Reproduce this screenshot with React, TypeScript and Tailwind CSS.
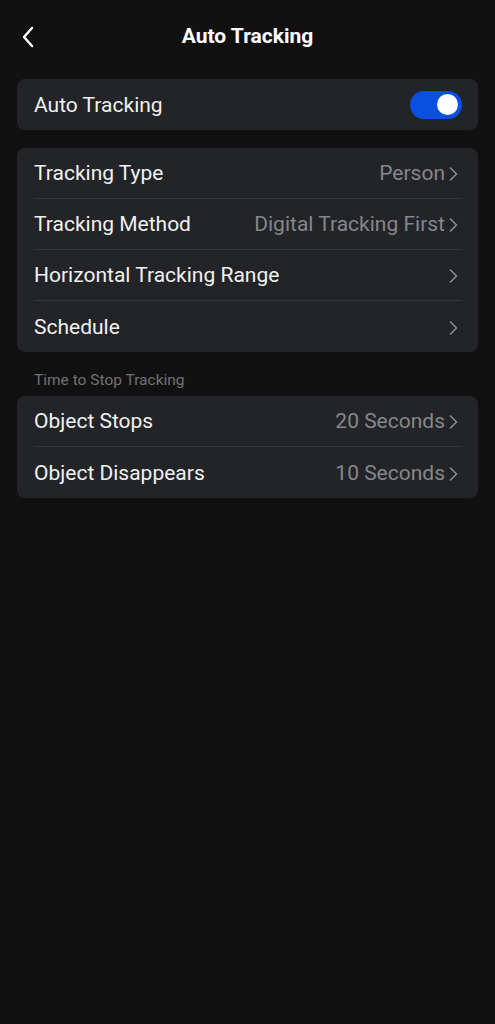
import React from 'react';

const Chevron = ({ className = '' }: { className?: string }) => (
  <svg width="9" height="16" viewBox="0 0 9 16" className={className} fill="none">
    <path d="M1.5 2l6 6-6 6" stroke="currentColor" strokeWidth="1.7" strokeLinecap="round" strokeLinejoin="round" />
  </svg>
);

type RowProps = { label: string; value?: string; last?: boolean };

const Row = ({ label, value, last }: RowProps) => (
  <div className="pl-[17px] pr-[16px]">
    <div className={`flex h-[51px] items-center justify-between pt-[2px] ${last ? '' : 'border-b border-[#34373c]'}`}>
      <span className="text-[21px] text-[#f1f1f1]">{label}</span>
      <span className="flex items-center gap-[4px] pr-[4px] text-[21px] text-[#85878a]">
        {value && <span>{value}</span>}
        <Chevron className="text-[#8a8c8f]" />
      </span>
    </div>
  </div>
);

const App: React.FC = () => {
  return (
    <div className="min-h-[1024px] w-full bg-[#111111] font-['Roboto',sans-serif]">
      {/* Header */}
      <div className="relative flex h-[74px] items-center justify-center">
        <button className="absolute left-[21px] top-[26px] text-white">
          <svg width="14" height="22" viewBox="0 0 14 22" fill="none">
            <path d="M11 2L3 11l8 9" stroke="currentColor" strokeWidth="2.4" strokeLinecap="round" strokeLinejoin="round" />
          </svg>
        </button>
        <h1 className="text-[21px] font-bold text-white">Auto Tracking</h1>
      </div>

      <div className="mt-[5px] flex flex-col px-[17px]">
        {/* Toggle card */}
        <div className="flex h-[51px] items-center justify-between rounded-[8px] bg-[#222428] pl-[17px] pr-[16px]">
          <span className="pt-[2px] text-[21px] text-[#f1f1f1]">Auto Tracking</span>
          <div className="flex h-[28px] w-[52px] items-center justify-end rounded-full bg-[#0a4fe0] pr-[4px]">
            <div className="h-[21px] w-[21px] rounded-full bg-white" />
          </div>
        </div>

        {/* Tracking settings */}
        <div className="mt-[18px] rounded-[8px] bg-[#222428]">
          <Row label="Tracking Type" value="Person" />
          <Row label="Tracking Method" value="Digital Tracking First" />
          <Row label="Horizontal Tracking Range" />
          <Row label="Schedule" last />
        </div>

        <div className="px-[17px] pb-[6px] pt-[18px] text-[15.5px] leading-[20px] text-[#707275]">Time to Stop Tracking</div>

        <div className="rounded-[8px] bg-[#222428]">
          <Row label="Object Stops" value="20 Seconds" />
          <Row label="Object Disappears" value="10 Seconds" last />
        </div>
      </div>
    </div>
  );
};

export default App;
